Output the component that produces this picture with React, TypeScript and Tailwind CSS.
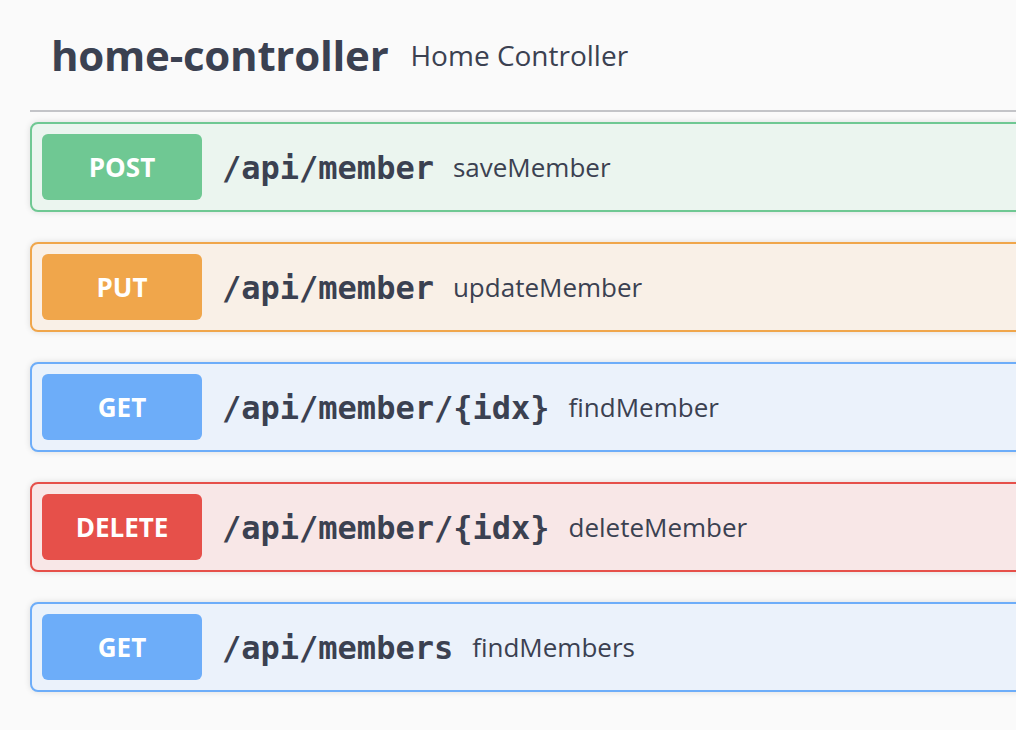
const ops = [
  { method: "POST", path: "/api/member", summary: "saveMember", badge: "bg-[#6fc893]", box: "border-[#6fc893] bg-[#ebf5ef]" },
  { method: "PUT", path: "/api/member", summary: "updateMember", badge: "bg-[#f0a64b]", box: "border-[#f0a64b] bg-[#f9f0e7]" },
  { method: "GET", path: "/api/member/{idx}", summary: "findMember", badge: "bg-[#6dadf9]", box: "border-[#6dadf9] bg-[#ebf2fb]" },
  { method: "DELETE", path: "/api/member/{idx}", summary: "deleteMember", badge: "bg-[#e6504a]", box: "border-[#e6504a] bg-[#f8e7e7]" },
  { method: "GET", path: "/api/members", summary: "findMembers", badge: "bg-[#6dadf9]", box: "border-[#6dadf9] bg-[#ebf2fb]" },
];

export default function App() {
  return (
    <div className="w-[1016px] h-[730px] overflow-hidden bg-[#fafafa] text-[#3b4151] font-['Open_Sans',sans-serif]">
      <div className="w-[1100px] pl-[30px]">
        <h4 className="h-[112px] flex items-center pl-[21px] border-b-2 border-[#c3c4c8]">
          <span className="font-bold text-[42px] leading-none tracking-[-0.25px]">home-controller</span>
          <small className="ml-[22px] text-[28px] leading-none">Home Controller</small>
        </h4>
        <div className="mt-[10px] flex flex-col gap-[30px]">
          {ops.map((op, i) => (
            <div
              key={i}
              className={`h-[90px] flex items-center p-[10px] border-2 rounded-lg shadow-[0_0_6px_rgba(0,0,0,0.12)] ${op.box}`}
            >
              <span
                className={`w-[160px] h-[66px] shrink-0 rounded-md flex items-center justify-center text-white font-bold text-[26px] ${op.badge}`}
              >
                {op.method}
              </span>
              <span className="pl-[20px] pt-[2px] font-['DejaVu_Sans_Mono',monospace] font-bold text-[32px]">{op.path}</span>
              <span className="ml-[19px] text-[26px]">{op.summary}</span>
            </div>
          ))}
        </div>
      </div>
    </div>
  );
}
